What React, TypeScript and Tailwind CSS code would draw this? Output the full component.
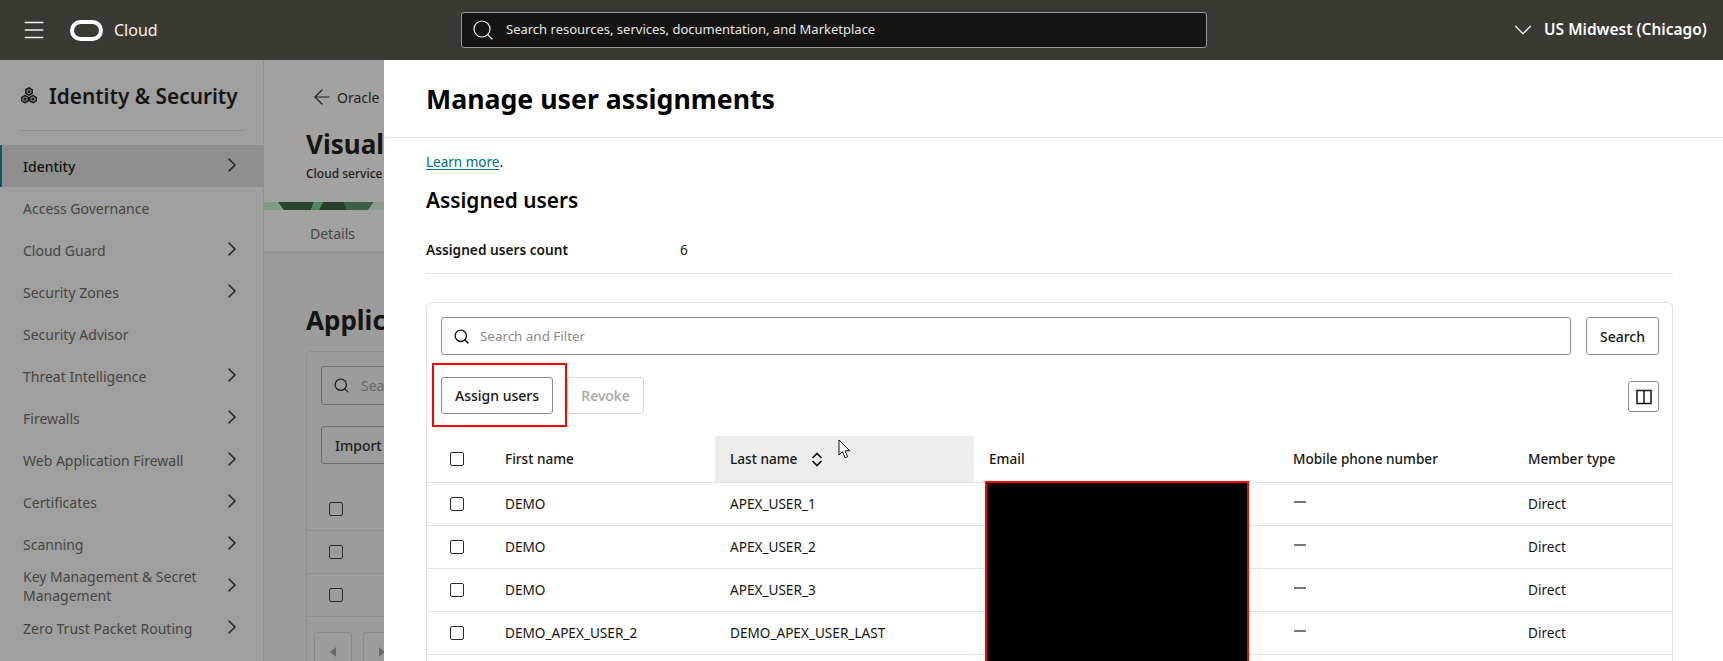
import { ChevronRight, ChevronDown, Menu, Search, ArrowLeft } from "lucide-react";

const navItems = [
  { label: "Identity", arrow: true, active: true },
  { label: "Access Governance", arrow: false },
  { label: "Cloud Guard", arrow: true },
  { label: "Security Zones", arrow: true },
  { label: "Security Advisor", arrow: false },
  { label: "Threat Intelligence", arrow: true },
  { label: "Firewalls", arrow: true },
  { label: "Web Application Firewall", arrow: true },
  { label: "Certificates", arrow: true },
  { label: "Scanning", arrow: true },
  { label: "Key Management & Secret Management", arrow: true },
  { label: "Zero Trust Packet Routing", arrow: true },
];

const users = [
  { first: "DEMO", last: "APEX_USER_1" },
  { first: "DEMO", last: "APEX_USER_2" },
  { first: "DEMO", last: "APEX_USER_3" },
  { first: "DEMO_APEX_USER_2", last: "DEMO_APEX_USER_LAST" },
];

const Checkbox = () => <span className="block w-[14px] h-[14px] rounded-[2px] border-[1.5px] border-[#2e2c2a]" />;

const CubesIcon = () => (
  <svg width="18" height="18" viewBox="0 0 18 18" fill="none" stroke="#1a1917" strokeWidth="1.6">
    <path d="M9 1l3.2 1.8v3.4L9 8 5.8 6.2V2.8z" />
    <path d="M5 8.6l3.2 1.8v3.4L5 15.6l-3.2-1.8v-3.4z" />
    <path d="M13 8.6l3.2 1.8v3.4L13 15.6l-3.2-1.8v-3.4z" />
    <circle cx="9" cy="4.5" r="0.8" fill="#1a1917" />
    <circle cx="5" cy="12.1" r="0.8" fill="#1a1917" />
    <circle cx="13" cy="12.1" r="0.8" fill="#1a1917" />
  </svg>
);

const Sidebar = () => (
  <aside className="w-[264px] shrink-0 h-full bg-[#9f9f9f] border-r border-[#8f8f8f]">
    <div className="mx-[18px] h-[71px] pt-[21px] border-b border-[#8e8e8e] flex items-start">
      <span className="mt-[6px] ml-[2px]"><CubesIcon /></span>
      <span className="ml-[11px] text-[20.8px] leading-[30px] font-semibold text-[#161513]">Identity &amp; Security</span>
    </div>
    <nav className="mt-[14px]">
      {navItems.map((item) => (
        <div
          key={item.label}
          className={`h-[42px] flex items-center justify-between pr-[19px] text-[14px] ${
            item.active ? "bg-[#8f8f8f] border-l-2 border-[#0e5a6d] pl-[21px] text-[#161513] font-medium" : "pl-[23px] text-[#474543]"
          }`}
        >
          <span className="leading-[19px] w-[190px]">{item.label}</span>
          {item.arrow && <ChevronRight size={24} strokeWidth={1.6} className="text-[#262523] -mt-[2px]" />}
        </div>
      ))}
    </nav>
  </aside>
);

const BackgroundPage = () => (
  <div className="w-[120px] shrink-0 h-full overflow-hidden bg-[#9c9c9c]">
    <div className="w-[600px] h-[192px] bg-[#a3a2a0] border-b border-[#929292] shadow-sm flex flex-col">
      <div className="flex items-center pl-[46px] pt-[25px] text-[14px] text-[#1f1e1c]">
        <ArrowLeft size={24} strokeWidth={1.2} />
        <span className="ml-[3px]">Oracle Cloud</span>
      </div>
      <div className="pl-[42px] mt-[18px] text-[26px] leading-[34px] font-bold text-[#161513]">Visual</div>
      <div className="pl-[42px] mt-[4px] text-[12px] leading-[18px] font-medium text-[#1f1e1c]">Cloud service</div>
      <svg className="mt-[19px] block shrink-0" width="122" height="8" viewBox="0 0 122 8">
        <rect width="122" height="8" fill="#7c9c84" />
        <path d="M14 0h36l-3 8H20z" fill="#2a4632" />
        <path d="M50 0h9l-4 8h-8z" fill="#4e8a5c" />
        <path d="M59 0h21l3 8H55z" fill="#273f2e" />
        <path d="M80 0h30l-6 8H83z" fill="#3d5f47" />
        <path d="M104 8l6-8h12v8z" fill="#8d9b90" />
      </svg>
      <div className="pl-[46px] h-[42px] pt-[4px] shrink-0 flex items-center text-[14px] text-[#454543]">Details</div>
    </div>
    <div className="pl-[42px] pt-[51px] w-[600px] text-[26px] leading-[34px] font-bold text-[#161513]">Applications</div>
    <div className="ml-[42px] mt-[14px] w-[600px] h-[320px] border border-[#8e8e8e] rounded-[5px] px-[14px] pt-[14px]">
      <div className="h-[39px] border border-[#6f6f6f] rounded-[3px] flex items-center pl-[11px] gap-[11px] text-[14px] text-[#6a6a68]">
        <Search size={17} strokeWidth={1.7} className="text-[#1f1e1c]" />
        <span>Search and Filter</span>
      </div>
      <div className="mt-[21px] h-[38px] w-[120px] border border-[#6f6f6f] rounded-[3px] flex items-center pl-[13px] text-[14px] font-medium text-[#1f1e1c]">Import</div>
      <div className="-mx-[14px] mt-[24px]">
        <div className="h-[43px] border-b border-[#8e8e8e] flex items-center pl-[22px]"><Checkbox /></div>
        <div className="h-[43px] border-b border-[#8e8e8e] flex items-center pl-[22px]"><Checkbox /></div>
        <div className="h-[43px] border-b border-[#8e8e8e] flex items-center pl-[22px]"><Checkbox /></div>
      </div>
      <div className="flex gap-[11px] -ml-[7px] mt-[15px]">
        <div className="w-[38px] h-[40px] border border-[#8a8a8a] rounded-[3px] flex items-center justify-center">
          <span className="w-0 h-0 border-y-[5px] border-y-transparent border-r-[6px] border-r-[#6a6a6a]" />
        </div>
        <div className="w-[38px] h-[40px] border border-[#8a8a8a] rounded-[3px] flex items-center justify-center">
          <span className="w-0 h-0 border-y-[5px] border-y-transparent border-l-[6px] border-l-[#6a6a6a]" />
        </div>
      </div>
    </div>
  </div>
);

const ActionButton = ({ children, disabled = false, className = "" }: { children: React.ReactNode; disabled?: boolean; className?: string }) => (
  <div
    className={`rounded-[3px] border flex items-center justify-center text-[14px] font-medium ${
      disabled ? "border-[#d9d8d6] text-[#a8a6a3]" : "border-[#8e8c89] text-[#161513]"
    } ${className}`}
  >
    {children}
  </div>
);

const UserTable = () => (
  <div className="relative mt-[9px] text-[13.6px] text-[#161513]">
    <div className="grid grid-cols-[78px_210px_259px_319px_235px_1fr] h-[47px] items-center border-b border-[#e4e3e1]">
      <div className="pl-[23px]"><Checkbox /></div>
      <div className="font-medium">First name</div>
      <div className="relative h-full flex items-center pl-[15px] gap-[14px] bg-[#ececec] font-medium">
        Last name
        <svg width="12" height="15" viewBox="0 0 12 15" fill="none" stroke="#161513" strokeWidth="1.7">
          <path d="M1.5 6L6 1.5 10.5 6" />
          <path d="M1.5 9L6 13.5 10.5 9" />
        </svg>
        <svg className="absolute left-[123px] top-[3px]" width="13" height="20" viewBox="0 0 13 20">
          <path d="M1 1v15l3.5-3.3 2.6 6 2.5-1.1-2.6-5.8h4.8z" fill="#fff" stroke="#111" strokeWidth="1" />
        </svg>
      </div>
      <div className="font-medium pl-[15px]">Email</div>
      <div className="font-medium">Mobile phone number</div>
      <div className="font-medium">Member type</div>
    </div>
    {[...users, { first: "", last: "" }].map((u, i) => (
      <div key={i} className="grid grid-cols-[78px_210px_259px_319px_235px_1fr] h-[43px] items-center border-b border-[#e4e3e1]">
        <div className="pl-[23px]">{u.last && <Checkbox />}</div>
        <div>{u.first}</div>
        <div className="pl-[15px]">{u.last}</div>
        <div />
        <div>{u.last && <span className="block ml-[1px] -mt-[3px] w-[12px] h-[2px] bg-[#7a7876]" />}</div>
        <div>{u.last && "Direct"}</div>
      </div>
    ))}
    <div className="absolute left-[558px] top-[45px] w-[264px] h-[230px] bg-black border-2 border-[#ff0000]" />
  </div>
);

export default function App() {
  return (
    <div className="w-[1723px] h-[661px] overflow-hidden bg-white font-['Noto_Sans',sans-serif]">
      <header className="h-[60px] bg-[#3c3833] flex items-center text-white">
        <Menu size={26} strokeWidth={1.4} className="ml-[21px] text-[#f2f2f2]" />
        <svg className="ml-[23px]" width="33" height="21" viewBox="0 0 33 21">
          <rect x="2" y="2" width="29" height="17" rx="8.5" fill="none" stroke="#fff" strokeWidth="4" />
        </svg>
        <span className="ml-[11px] w-[40px] text-[16px] text-[#f5f5f5]">Cloud</span>
        <div className="ml-[307px] w-[746px] h-[36px] bg-[#161513] border border-[#9a9894] rounded-[3px] flex items-center pl-[9px]">
          <Search size={24} strokeWidth={1.2} className="text-[#f2f2f2] shrink-0" />
          <span className="ml-[11px] text-[13px] text-[#e6e5e3]">Search resources, services, documentation, and Marketplace</span>
        </div>
        <ChevronDown size={30} strokeWidth={1} className="ml-[301px] text-[#f2f2f2]" />
        <span className="ml-[6px] text-[15.5px] font-semibold whitespace-nowrap">US Midwest (Chicago)</span>
      </header>
      <div className="flex h-[601px]">
        <Sidebar />
        <BackgroundPage />
        <main className="flex-1 min-w-0 bg-white text-[#161513]">
          <div className="h-[78px] pt-[2px] border-b border-[#e4e3e1] pl-[42px] flex items-center">
            <h1 className="text-[26.7px] font-bold text-black">Manage user assignments</h1>
          </div>
          <div className="pl-[42px] pr-[50px]">
            <p className="mt-[15px] text-[13.5px] leading-[19px]">
              <span className="text-[#006b8f] underline underline-offset-2">Learn more</span>.
            </p>
            <h2 className="mt-[14px] text-[20.8px] leading-[28px] font-semibold text-black">Assigned users</h2>
            <div className="mt-[26px] pb-[13px] border-b border-[#e4e3e1] flex items-center text-[13.7px] leading-[20px]">
              <span className="w-[254px] font-semibold">Assigned users count</span>
              <span>6</span>
            </div>
            <section className="mt-[28px] border border-[#e4e3e1] rounded-[5px]">
              <div className="flex gap-[15px] pt-[14px] pl-[14px] pr-[13px]">
                <div className="flex-1 h-[38px] border border-[#8e8c89] rounded-[3px] flex items-center pl-[11px] gap-[10px] text-[13.4px] text-[#8e8c89]">
                  <Search size={17} strokeWidth={2} className="text-[#161513]" />
                  <span>Search and Filter</span>
                </div>
                <ActionButton className="w-[73px] h-[38px]">Search</ActionButton>
              </div>
              <div className="mt-[8px] flex items-start pl-[5px] pr-[13px]">
                <div className="w-[135px] h-[64px] border-2 border-[#ff0000] flex items-center pl-[7px]">
                  <ActionButton className="w-[112px] h-[37px]">Assign users</ActionButton>
                </div>
                <ActionButton disabled className="w-[77px] h-[37px] mt-[14px]">Revoke</ActionButton>
                <div className="ml-auto mt-[18px] w-[31px] h-[31px] border border-[#8e8c89] rounded-[3px] flex items-center justify-center">
                  <svg width="16" height="16" viewBox="0 0 16 16" fill="none" stroke="#161513" strokeWidth="1.5">
                    <rect x="1" y="1.5" width="14" height="13" />
                    <path d="M8 1.5v13" />
                  </svg>
                </div>
              </div>
              <UserTable />
            </section>
          </div>
        </main>
      </div>
    </div>
  );
}
